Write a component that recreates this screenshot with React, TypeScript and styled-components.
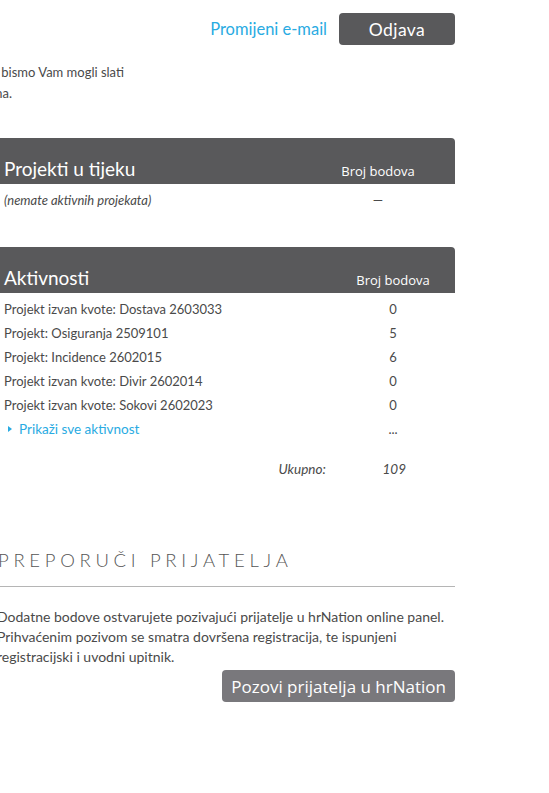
import React from 'react'
import styled, { createGlobalStyle } from 'styled-components'

const GlobalStyle = createGlobalStyle`
  html, body {
    margin: 0;
    padding: 0;
    background: #fff;
  }
  body {
    font-family: Lato, 'Open Sans', sans-serif;
    color: #4a4a4a;
    overflow: hidden;
  }
`

// the page is scrolled a little to the right, so the column overflows on the left
const Page = styled.div`
  width: 455px;
  display: flex;
  justify-content: flex-end;
`

const Column = styled.main`
  width: 460px;
  flex-shrink: 0;
  display: flex;
  flex-direction: column;
`

const TopBar = styled.div`
  display: flex;
  justify-content: flex-end;
  align-items: center;
  gap: 12px;
  padding-top: 13px;
`

const Link = styled.a`
  color: #29abe2;
  font-size: 16.5px;
  text-decoration: none;
  cursor: pointer;
`

const DarkButton = styled.button<{ $tone?: 'dark' | 'mid' }>`
  height: 32px;
  border: 0;
  border-radius: 4px;
  background: ${(p) => (p.$tone === 'mid' ? '#79787c' : '#59595b')};
  color: #fff;
  font-family: ${(p) => (p.$tone === 'mid' ? "'Open Sans', sans-serif" : 'Lato, sans-serif')};
  font-size: ${(p) => (p.$tone === 'mid' ? '17px' : '17.5px')};
  padding: 0 9px;
  cursor: pointer;
`

const LogoutButton = styled(DarkButton)`
  width: 116px;
  letter-spacing: 0.4px;
`

const Note = styled.div`
  margin-top: 17px;
  font-size: 13px;
  line-height: 21px;
`

// each visible line of the note ends at its own place; the start is off-screen
const NoteLine = styled.div<{ $end: number }>`
  width: ${(p) => p.$end + 5}px;
  display: flex;
  justify-content: flex-end;
  white-space: nowrap;
`

const Table = styled.section<{ $gap: number }>`
  margin-top: ${(p) => p.$gap}px;
`

const Head = styled.div<{ $col: number }>`
  display: grid;
  grid-template-columns: 1fr ${(p) => p.$col}px;
  align-items: baseline;
  height: 46px;
  box-sizing: border-box;
  padding: 19px 0 0 9px;
  background: #59595b;
  border-top-right-radius: 4px;
  color: #fff;
`

const HeadTitle = styled.h2`
  margin: 0;
  font-size: 19px;
  font-weight: 400;
`

const HeadCol = styled.span`
  font-family: 'Open Sans', sans-serif;
  font-size: 13px;
  text-align: center;
`

const Rows = styled.div`
  padding-top: 4px;
`

const Row = styled.div<{ $col: number }>`
  display: grid;
  grid-template-columns: 1fr ${(p) => p.$col}px;
  align-items: center;
  height: 24px;
  padding-left: 9px;
  font-size: 13px;
`

const Cell = styled.span<{ $italic?: boolean }>`
  font-style: ${(p) => (p.$italic ? 'italic' : 'normal')};
`

const Points = styled.span`
  text-align: center;
`

const MoreLink = styled(Link)`
  font-size: 13.5px;
  display: flex;
  align-items: center;
  gap: 7px;
  padding-left: 4px;
`

const Arrow = styled.span`
  width: 0;
  height: 0;
  border-top: 3px solid transparent;
  border-bottom: 3px solid transparent;
  border-left: 4px solid #29abe2;
`

const Total = styled.div`
  display: flex;
  justify-content: flex-end;
  margin-top: 20px;
  font-size: 13.5px;
  font-style: italic;
  padding-right: 49px;
`

const TotalLabel = styled.span`
  width: 104px;
`

const Section = styled.section`
  margin-top: 72px;
`

const SectionTitle = styled.h3`
  margin: 0;
  font-weight: 300;
  font-size: 18.5px;
  letter-spacing: 4.7px;
  color: #555;
  padding-left: 3px;
  padding-bottom: 15px;
  border-bottom: 1px solid #b5b5b5;
`

const Copy = styled.p`
  margin: 20px 0 0 2px;
  font-size: 14px;
  line-height: 20px;
`

const CopyRow = styled.div`
  display: flex;
  justify-content: flex-end;
  margin-top: 3px;
`

const activities = [
  ['Projekt izvan kvote: Dostava 2603033', '0'],
  ['Projekt: Osiguranja 2509101', '5'],
  ['Projekt: Incidence 2602015', '6'],
  ['Projekt izvan kvote: Divir 2602014', '0'],
  ['Projekt izvan kvote: Sokovi 2602023', '0'],
]

export default function App() {
  return (
    <>
      <GlobalStyle />
      <Page>
        <Column>
          <TopBar>
            <Link>Promijeni e-mail</Link>
            <LogoutButton>Odjava</LogoutButton>
          </TopBar>

          <Note>
            <NoteLine $end={124}>Molimo potvrdite svoju e-mail adresu kako bismo Vam mogli slati</NoteLine>
            <NoteLine $end={12}>obavijesti o novim istraživanjima.</NoteLine>
          </Note>

          <Table $gap={34}>
            <Head $col={154}>
              <HeadTitle>Projekti u tijeku</HeadTitle>
              <HeadCol>Broj bodova</HeadCol>
            </Head>
            <Rows>
              <Row $col={154}>
                <Cell $italic>(nemate aktivnih projekata)</Cell>
                <Points>—</Points>
              </Row>
            </Rows>
          </Table>

          <Table $gap={35}>
            <Head $col={124}>
              <HeadTitle>Aktivnosti</HeadTitle>
              <HeadCol>Broj bodova</HeadCol>
            </Head>
            <Rows>
              {activities.map(([name, pts]) => (
                <Row $col={124} key={name}>
                  <Cell>{name}</Cell>
                  <Points>{pts}</Points>
                </Row>
              ))}
              <Row $col={124}>
                <MoreLink>
                  <Arrow />
                  Prikaži sve aktivnost
                </MoreLink>
                <Points>...</Points>
              </Row>
            </Rows>
            <Total>
              <TotalLabel>Ukupno:</TotalLabel>
              <span>109</span>
            </Total>
          </Table>

          <Section>
            <SectionTitle>PREPORUČI PRIJATELJA</SectionTitle>
            <Copy>
              Dodatne bodove ostvarujete pozivajući prijatelje u hrNation online panel.
              <br />
              Prihvaćenim pozivom se smatra dovršena registracija, te ispunjeni
              <br />
              registracijski i uvodni upitnik.
            </Copy>
            <CopyRow>
              <DarkButton $tone="mid">Pozovi prijatelja u hrNation</DarkButton>
            </CopyRow>
          </Section>
        </Column>
      </Page>
    </>
  )
}
